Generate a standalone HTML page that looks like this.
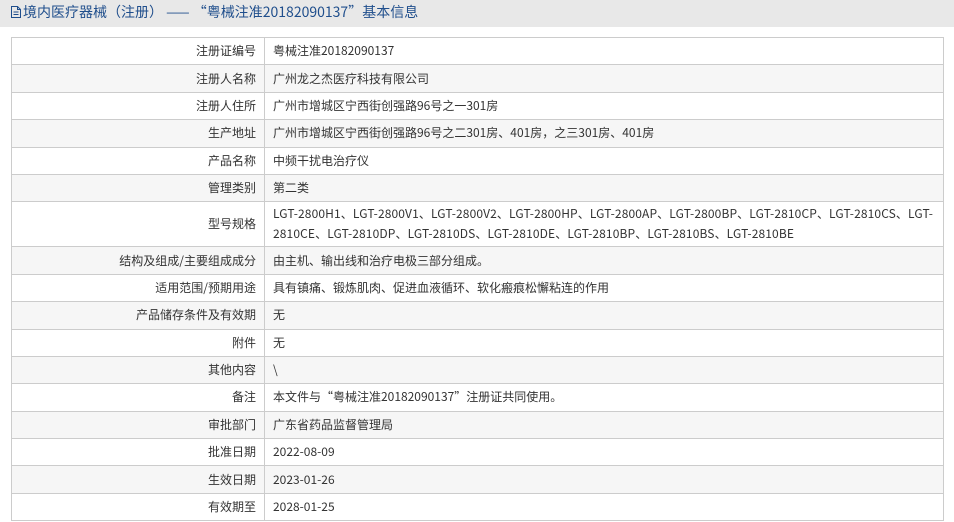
<!DOCTYPE html>
<html><head><meta charset="utf-8"><style>
body{margin:0;width:954px;height:522px;overflow:hidden;background:#fff;font-family:"Noto Sans CJK SC","Liberation Sans",sans-serif;}
.hd{height:27px;background:#e8e8e8;color:#1f4e8c;font-size:14px;line-height:25px;padding-left:10px;}
.hd svg{vertical-align:-2px;margin-right:1px}
table{position:absolute;left:11px;top:37px;width:933px;border-collapse:collapse;font-size:12px;color:#333;}
td{border:1px solid #ccc;height:26.4px;padding:0 8px;line-height:20px;}
td.l{width:236px;text-align:right;}
tr:nth-child(even) td{background:#f6f6f6;}
</style></head><body>
<div class="hd"><svg width="12" height="14" viewBox="0 0 12 14"><path d="M1.5 1.5h6l3 3v8h-9z M7.5 1.5v3h3 M3.5 7h5 M3.5 9.5h5" fill="none" stroke="#1f4e8c" stroke-width="1"/></svg>境内医疗器械（注册） —— “粤械注准20182090137”基本信息</div>
<table>
<tr><td class="l">注册证编号</td><td>粤械注准20182090137</td></tr>
<tr><td class="l">注册人名称</td><td>广州龙之杰医疗科技有限公司</td></tr>
<tr><td class="l">注册人住所</td><td>广州市增城区宁西街创强路96号之一301房</td></tr>
<tr><td class="l">生产地址</td><td>广州市增城区宁西街创强路96号之二301房、401房，之三301房、401房</td></tr>
<tr><td class="l">产品名称</td><td>中频干扰电治疗仪</td></tr>
<tr><td class="l">管理类别</td><td>第二类</td></tr>
<tr><td class="l" style="height:44px">型号规格</td><td style="word-break:break-all;padding-top:2px;padding-bottom:2px;letter-spacing:0.12px">LGT-2800H1、LGT-2800V1、LGT-2800V2、LGT-2800HP、LGT-2800AP、LGT-2800BP、LGT-2810CP、LGT-2810CS、LGT-2810CE、LGT-2810DP、LGT-2810DS、LGT-2810DE、LGT-2810BP、LGT-2810BS、LGT-2810BE</td></tr>
<tr><td class="l">结构及组成/主要组成成分</td><td>由主机、输出线和治疗电极三部分组成。</td></tr>
<tr><td class="l">适用范围/预期用途</td><td>具有镇痛、锻炼肌肉、促进血液循环、软化瘢痕松懈粘连的作用</td></tr>
<tr><td class="l">产品储存条件及有效期</td><td>无</td></tr>
<tr><td class="l">附件</td><td>无</td></tr>
<tr><td class="l">其他内容</td><td>\</td></tr>
<tr><td class="l">备注</td><td>本文件与“粤械注准20182090137”注册证共同使用。</td></tr>
<tr><td class="l">审批部门</td><td>广东省药品监督管理局</td></tr>
<tr><td class="l">批准日期</td><td>2022-08-09</td></tr>
<tr><td class="l">生效日期</td><td>2023-01-26</td></tr>
<tr><td class="l">有效期至</td><td>2028-01-25</td></tr>
</table>
</body></html>
